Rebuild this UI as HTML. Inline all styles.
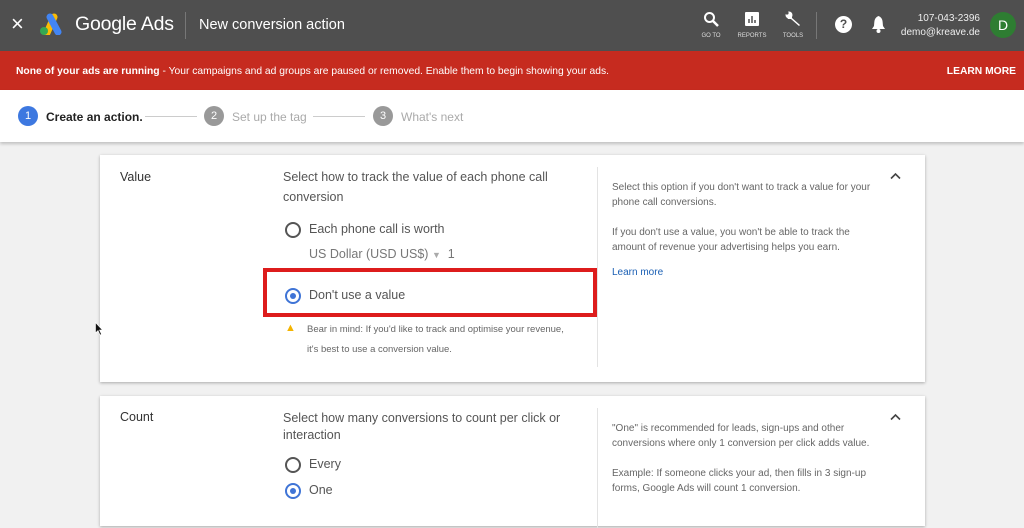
<!DOCTYPE html>
<html><head><style>
*{margin:0;padding:0;box-sizing:border-box}
body{width:1024px;height:513px;overflow:hidden;background:#f1f1f1;font-family:"Liberation Sans",Arial,sans-serif;position:relative}
.a{position:absolute}
.hd{left:0;top:0;width:1024px;height:51px;background:#4f4f4f;color:#fff}
.rb{left:0;top:51px;width:1024px;height:39px;background:#c62b1f;color:#fff;font-size:10.3px}
.st{left:0;top:90px;width:1024px;height:52px;background:#fff;box-shadow:0 2px 3px rgba(0,0,0,.2)}
.card{left:100px;width:825px;background:#fff;box-shadow:0 1px 3px rgba(0,0,0,.3)}
.t{color:#555;font-size:12.5px}
.s{color:#666;font-size:10px;line-height:15px}
.rad{width:16px;height:16px;border:2px solid #555;border-radius:50%}
.rad.on{border-color:#3f74d6}
.rad.on:after{content:"";position:absolute;left:3px;top:3px;width:6px;height:6px;border-radius:50%;background:#3f74d6}
.circ{width:20px;height:20px;border-radius:50%;color:#fff;font-size:11px;text-align:center;line-height:20px}
.ic{font-size:6px;color:#ddd;text-align:center;width:30px}
</style></head><body>
<div class="a hd">
 <div class="a" style="left:11px;top:11px;font-size:22px;color:#fff">×</div>
 <svg class="a" style="left:38px;top:13px" width="26" height="22" viewBox="0 0 26 22"><path d="M9 20 L16 4" stroke="#fbbc04" stroke-width="7" stroke-linecap="round"/><path d="M12 4 L20 19" stroke="#4285f4" stroke-width="7" stroke-linecap="round"/><circle cx="6" cy="18" r="4" fill="#34a853"/></svg>
 <div class="a" style="left:75px;top:13px;font-size:19.5px;letter-spacing:-0.2px">Google Ads</div>
 <div class="a" style="left:185px;top:12px;width:1px;height:27px;background:#777"></div>
 <div class="a" style="left:199px;top:17px;font-size:14.5px">New conversion action</div>
 <svg class="a" style="left:703px;top:11px" width="16" height="16"><circle cx="6.5" cy="6.5" r="4.5" stroke="#fff" stroke-width="2" fill="none"/><path d="M10 10 L15 15" stroke="#fff" stroke-width="2.5"/></svg>
 <div class="a ic" style="left:696px;top:33px">GO TO</div>
 <svg class="a" style="left:745px;top:12px" width="14" height="14"><rect width="14" height="14" rx="1" fill="#fff"/><path d="M4 11V7M7 11V4M10 11V8" stroke="#4f4f4f" stroke-width="1.5"/></svg>
 <div class="a ic" style="left:737px;top:33px">REPORTS</div>
 <svg class="a" style="left:784px;top:10px" width="18" height="18" viewBox="0 0 18 18"><path d="M2 5 L5 2 L8 5 L8 8 L16 15 L15 16 L7 9 L4 9 Z" fill="#fff"/><circle cx="5" cy="5" r="3.5" fill="#fff"/><circle cx="3" cy="3" r="1.6" fill="#4f4f4f"/></svg>
 <div class="a ic" style="left:778px;top:33px">TOOLS</div>
 <div class="a" style="left:816px;top:12px;width:1px;height:27px;background:#777"></div>
 <div class="a" style="left:835px;top:16px;width:17px;height:17px;border-radius:50%;background:#fff;color:#4f4f4f;font-size:12px;font-weight:bold;text-align:center;line-height:17px">?</div>
 <svg class="a" style="left:871px;top:15px" width="15" height="18"><path d="M7.5 1 C3 3 3.5 6 3 11 L1 14 H14 L12 11 C11.5 6 12 3 7.5 1Z" fill="#fff"/><circle cx="7.5" cy="16" r="2" fill="#fff"/></svg>
 <div class="a" style="left:900px;top:12px;width:80px;text-align:right;font-size:10px;line-height:14px;color:#eee">107-043-2396<br>demo@kreave.de</div>
 <div class="a" style="left:990px;top:12px;width:26px;height:26px;border-radius:50%;background:#2e7d32;color:#fff;text-align:center;line-height:26px;font-size:14px">D</div>
</div>
<div class="a rb"><div class="a" style="left:16px;top:15px"><b>None of your ads are running</b> - Your campaigns and ad groups are paused or removed. Enable them to begin showing your ads.</div><div class="a" style="right:8px;top:15px;font-weight:bold">LEARN MORE</div></div>
<div class="a st">
 <div class="a circ" style="left:18px;top:16px;background:#3d78e0">1</div>
 <div class="a" style="left:46px;top:20px;font-size:12px;color:#222;font-weight:bold">Create an action.</div>
 <div class="a" style="left:145px;top:26px;width:52px;height:1px;background:#ccc"></div>
 <div class="a circ" style="left:204px;top:16px;background:#999">2</div>
 <div class="a" style="left:232px;top:20px;font-size:12px;color:#aaa">Set up the tag</div>
 <div class="a" style="left:313px;top:26px;width:52px;height:1px;background:#ccc"></div>
 <div class="a circ" style="left:373px;top:16px;background:#999">3</div>
 <div class="a" style="left:401px;top:20px;font-size:12px;color:#aaa">What's next</div>
</div>
<div class="a card" style="top:155px;height:227px">
 <div class="a t" style="left:20px;top:15px;color:#333">Value</div>
 <div class="a t" style="left:183px;top:12px;width:270px;line-height:20px">Select how to track the value of each phone call conversion</div>
 <div class="a rad" style="left:185px;top:67px"></div>
 <div class="a t" style="left:209px;top:67px">Each phone call is worth</div>
 <div class="a t" style="left:209px;top:92px;color:#777">US Dollar (USD US$) <span style="color:#aaa;font-size:9px">▼</span> &nbsp;1</div>
 <div class="a" style="left:163px;top:113px;width:334px;height:49px;border:4px solid #dd1c1c"></div>
 <div class="a rad on" style="left:185px;top:133px"></div>
 <div class="a t" style="left:209px;top:133px">Don't use a value</div>
 <div class="a" style="left:185px;top:167px;color:#f4b400;font-size:11px">▲</div>
 <div class="a s" style="left:207px;top:165px;line-height:20px;font-size:9.5px">Bear in mind: If you'd like to track and optimise your revenue,<br>it's best to use a conversion value.</div>
 <div class="a" style="left:497px;top:12px;width:1px;height:200px;background:#e3e3e3"></div>
 <div class="a s" style="left:512px;top:25px;width:260px">Select this option if you don't want to track a value for your phone call conversions.<br><br style="line-height:12px">If you don't use a value, you won't be able to track the amount of revenue your advertising helps you earn.</div>
 <div class="a s" style="left:512px;top:110px;color:#1a5fb4">Learn more</div>
 <svg class="a" style="left:790px;top:17px" width="11" height="8"><path d="M1 6.5 L5.5 2 L10 6.5" stroke="#444" stroke-width="1.6" fill="none"/></svg>
</div>
<div class="a card" style="top:396px;height:130px">
 <div class="a t" style="left:20px;top:14px;color:#333">Count</div>
 <div class="a t" style="left:183px;top:14px;width:290px;line-height:17px">Select how many conversions to count per click or interaction</div>
 <div class="a rad" style="left:185px;top:61px"></div>
 <div class="a t" style="left:209px;top:61px">Every</div>
 <div class="a rad on" style="left:185px;top:87px"></div>
 <div class="a t" style="left:209px;top:87px">One</div>
 <div class="a" style="left:497px;top:12px;width:1px;height:120px;background:#e3e3e3"></div>
 <div class="a s" style="left:512px;top:25px;width:265px">"One" is recommended for leads, sign-ups and other conversions where only 1 conversion per click adds value.<br><br style="line-height:12px">Example: If someone clicks your ad, then fills in 3 sign-up forms, Google Ads will count 1 conversion.</div>
 <svg class="a" style="left:790px;top:17px" width="11" height="8"><path d="M1 6.5 L5.5 2 L10 6.5" stroke="#444" stroke-width="1.6" fill="none"/></svg>
</div>
<svg class="a" style="left:95px;top:322px" width="8" height="14"><path d="M0.5 0.5 L0.5 11 L3 8.5 L5 13 L6.5 12.3 L4.5 8 L7.5 8 Z" fill="#111" stroke="#fff" stroke-width="0.6"/></svg>
</body></html>
